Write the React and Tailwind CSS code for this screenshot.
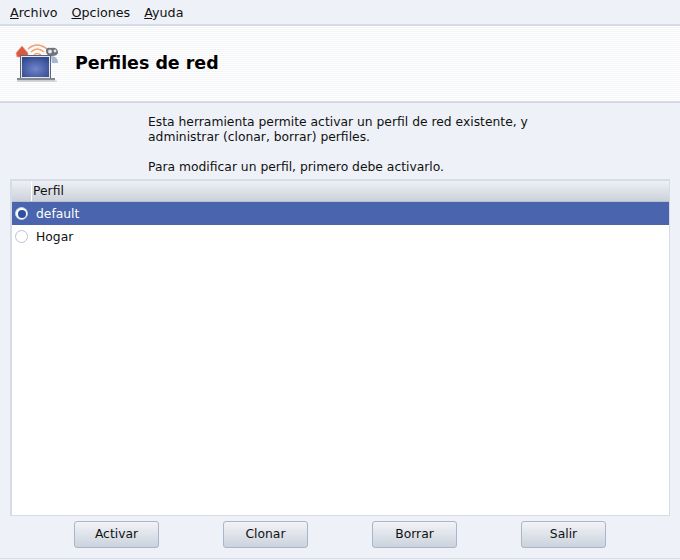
import React from "react";

const Btn = ({ children }) => (
  <button className="w-[85px] h-[27px] rounded-[3px] border border-[#a9b5c8] bg-gradient-to-b from-[#f1f3f7] to-[#ccd3dd] text-[12.33px] text-[#111] flex items-center justify-center">
    {children}
  </button>
);

const Radio = ({ on }) => (
  <span className={"w-[13px] h-[13px] rounded-full flex items-center justify-center border " + (on ? "bg-white border-[#c5cfe0]" : "bg-white border-[#b8c4d4]")}>
    {on && <span className="w-[8px] h-[8px] rounded-full bg-[#2f4f9f]" />}
  </span>
);

export default function App() {
  return (
    <div className="w-[680px] h-[560px] overflow-hidden flex flex-col bg-[#eef1f7] text-[12.33px] text-[#111] font-['DejaVu_Sans',sans-serif]">
      <div className="h-[26px] shrink-0 flex items-center gap-[14px] pl-[10px] pt-[1px] border-b-2 border-[#d5dce6] text-[12.7px]">
        <span><u>A</u>rchivo</span>
        <span><u>O</u>pciones</span>
        <span><u>A</u>yuda</span>
      </div>
      <div className="h-[77px] shrink-0 flex items-center pl-[14px] border-b-2 border-[#d3d9e1] bg-[repeating-linear-gradient(to_bottom,#ffffff_0px,#ffffff_1px,#f4f5f7_1px,#f4f5f7_2px)]">
        <svg width="46" height="42" viewBox="0 0 46 42" className="shrink-0 -mt-[1px]">
          <defs>
            <radialGradient id="scr" cx="50%" cy="60%" r="65%">
              <stop offset="0" stopColor="#6f86cc" />
              <stop offset="1" stopColor="#32498f" />
            </radialGradient>
          </defs>
          <path d="M2 11 L8 4 L14 11 L14 15 L3 15 Z" fill="#d9593f" stroke="#eba492" strokeWidth="0.8" />
          <path d="M14 7 Q23 -1 33 7 M17 10 Q23 4 30 10" fill="none" stroke="#f2a06c" strokeWidth="1.5" />
          <path d="M20 13 Q23 10 27 13" fill="none" stroke="#f2a06c" strokeWidth="1.3" />
          <path d="M32 9 Q32 5 37 6 Q44 5 44 11 Q43 14 38 14 Q32 14 32 9Z" fill="#6d727c" />
          <circle cx="36" cy="9.5" r="2" fill="#e4e6ea" />
          <circle cx="41" cy="9" r="1.4" fill="#e4e6ea" />
          <path d="M37 14 Q44 14 44 21 L38 21 Z" fill="#a6b6d2" />
          <rect x="6.5" y="13.5" width="30" height="23" fill="#e3e6ec" stroke="#5e6672" strokeWidth="1" />
          <rect x="8" y="15" width="27" height="20" fill="url(#scr)" />
          <rect x="3" y="36" width="38" height="2.5" fill="#858a92" />
          <rect x="3" y="38.5" width="40" height="1.5" fill="#d4d6da" />
        </svg>
        <span className="ml-[15px] text-[17.45px] font-bold text-black leading-none">Perfiles de red</span>
      </div>
      <div className="pl-[148px] pt-[12px] h-[76px] shrink-0 leading-[15px]">
        <p className="whitespace-pre-line">{"Esta herramienta permite activar un perfil de red existente, y\nadministrar (clonar, borrar) perfiles."}</p>
        <p className="mt-[15px]">Para modificar un perfil, primero debe activarlo.</p>
      </div>
      <div className="mx-[10px] h-[337px] shrink-0 border-2 border-[#d5dce8] border-r border-b bg-white flex flex-col">
        <div className="h-[21px] shrink-0 flex border-b border-[#b9c2cf] bg-gradient-to-b from-[#eef0f4] to-[#ccd2db]">
          <div className="w-[20px] border-r border-white" />
          <div className="pl-px leading-[21px]">Perfil</div>
        </div>
        <div className="h-[23px] shrink-0 flex items-center bg-[#4a65ad] text-white pl-[3px] gap-[8px]">
          <Radio on />
          <span className="pt-[2px]">default</span>
        </div>
        <div className="h-[23px] shrink-0 flex items-center pl-[3px] gap-[8px]">
          <Radio />
          <span className="pt-[2px]">Hogar</span>
        </div>
      </div>
      <div className="mt-[5px] flex justify-center gap-[64px]">
        <Btn>Activar</Btn>
        <Btn>Clonar</Btn>
        <Btn>Borrar</Btn>
        <Btn>Salir</Btn>
      </div>
      <div className="mt-[10px] border-t border-[#d5dce6]" />
    </div>
  );
}
